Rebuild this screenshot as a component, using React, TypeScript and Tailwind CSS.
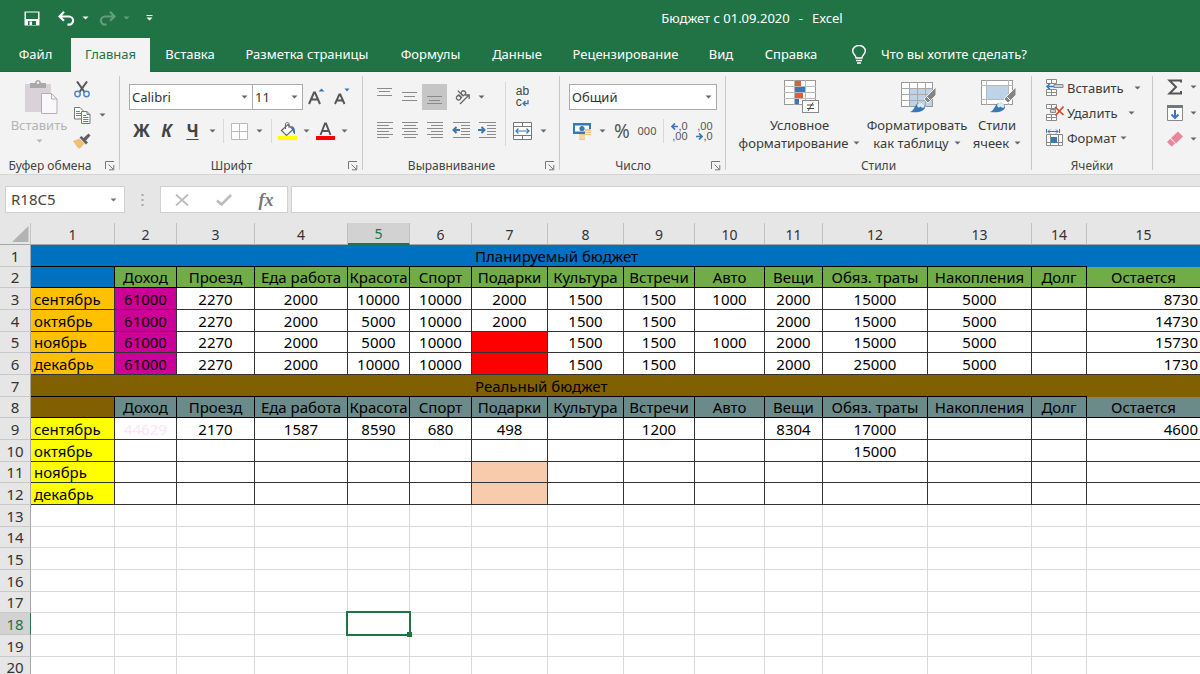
import React from "react";

type Kids = { children?: React.ReactNode };

const ribbonTabs = [
  { label: "Файл", width: "w-[71px]" },
  { label: "Главная", width: "w-[79px]" },
  { label: "Вставка", width: "w-[80px]" },
  { label: "Разметка страницы", width: "w-[154px]" },
  { label: "Формулы", width: "w-[93px]" },
  { label: "Данные", width: "w-[80px]" },
  { label: "Рецензирование", width: "w-[137px]" },
  { label: "Вид", width: "w-[54px]" },
  { label: "Справка", width: "w-[86px]" },
];

function Caret({ className = "text-[#666]" }: { className?: string }) {
  return (
    <svg width="7" height="4" viewBox="0 0 7 4" className={`shrink-0 ${className}`} aria-hidden="true">
      <path d="M0.5 0.5h6L3.5 3.6z" fill="currentColor" />
    </svg>
  );
}

function Tool({ label, width, className = "", children }: Kids & { label: string; width: string; className?: string }) {
  return (
    <button type="button" aria-label={label} className={`flex h-[26px] shrink-0 items-center justify-center ${width} ${className}`}>
      {children}
    </button>
  );
}

function Divider({ width, height = "h-6" }: { width: string; height?: string }) {
  return (
    <span className={`flex shrink-0 justify-center ${width}`}>
      <span className={`w-px bg-[#d8d8d8] ${height}`} />
    </span>
  );
}

function Group({ title, width, launcher = true, children }: Kids & { title: string; width: string; launcher?: boolean }) {
  return (
    <section aria-label={title} className={`flex shrink-0 pt-1 ${width}`}>
      <div className="flex min-w-0 flex-1 flex-col">
        <div className="h-[82px]">{children}</div>
        <div className="flex h-4 items-center">
          <span className="flex-1 text-center text-[12px] leading-4 text-[#444]">{title}</span>
          {launcher && (
            <button type="button" aria-label={`${title}: параметры`} className="flex w-[19px] justify-center text-[#777]">
              <svg width="10" height="10" viewBox="0 0 10 10" fill="none" stroke="currentColor">
                <path d="M0.5 8V0.5H9M3.5 3.5L8.5 8.5M8.8 4v4.8H4" />
              </svg>
            </button>
          )}
        </div>
      </div>
      <span className="mb-1 w-px bg-[#c9c9c9]" />
    </section>
  );
}

function Combo({ label, value, width, className = "" }: { label: string; value: string; width: string; className?: string }) {
  return (
    <div className={`relative h-[26px] shrink-0 ${width}`}>
      <select
        aria-label={label}
        defaultValue={value}
        className={`h-full w-full appearance-none border border-[#ababab] bg-white px-[2px] text-[13px] leading-6 text-[#333] ${className}`}
      >
        <option>{value}</option>
      </select>
      <span className="pointer-events-none absolute inset-y-0 right-[5px] flex items-center">
        <Caret />
      </span>
    </div>
  );
}

function Lines({ rows, width = 17, height = 18 }: { rows: [number, number, number][]; width?: number; height?: number }) {
  return (
    <svg width={width} height={height} viewBox={`0 0 ${width} ${height}`} stroke="#8a8a8a" strokeWidth="1">
      {rows.map(([x1, x2, y]) => (
        <path key={y} d={`M${x1} ${y}.5H${x2}`} />
      ))}
    </svg>
  );
}

function Indent({ right = false }: { right?: boolean }) {
  return (
    <svg width="19" height="18" viewBox="0 0 19 18" fill="none">
      <path d="M1 0.5h17M9 3.5h9M9 6.5h9M9 9.5h9M9 12.5h9M1 15.5h17" stroke="#8a8a8a" />
      {right ? (
        <path d="M0 8h6M3.5 5l3 3l-3 3" stroke="#3a77b5" strokeWidth="2" />
      ) : (
        <path d="M8 8h-6M4.5 5l-3 3l3 3" stroke="#3a77b5" strokeWidth="2" />
      )}
    </svg>
  );
}

function ClipboardIcon() {
  return (
    <svg width="33" height="34" viewBox="0 0 33 34">
      <rect x="0" y="4" width="26" height="28" fill="#d9d3d9" />
      <path d="M5 8V3h5c0-4 6-4 6 0h5v5z" fill="#a9a9a9" />
      <circle cx="13" cy="2.8" r="1.2" fill="#f3f3f3" />
      <path d="M16.5 13.5h10l5.500 5.500v14.500h-15.500z" fill="#fbf8fc" stroke="#b5aeb8" />
      <path d="M26.500 13.500v5.500h5.500" fill="none" stroke="#b5aeb8" />
    </svg>
  );
}

function ScissorsIcon() {
  return (
    <svg width="16" height="17" viewBox="0 0 16 17" fill="none">
      <path d="M3 0.500l7.500 10.500M13 0.500L5.500 11" stroke="#555" strokeWidth="2" />
      <circle cx="3.500" cy="13" r="2.700" stroke="#4a86c5" strokeWidth="1.400" />
      <circle cx="12.500" cy="13" r="2.700" stroke="#4a86c5" strokeWidth="1.400" />
    </svg>
  );
}

function CopyIcon() {
  return (
    <svg width="17" height="17" viewBox="0 0 17 17" fill="#fff" stroke="#777">
      <path d="M0.500 0.500h5.500l3 3v8.500h-8.500z" />
      <path d="M2 4.500h4M2 6.500h5M2 8.500h5" stroke="#4a86c5" />
      <path d="M7.500 4.500h5.500l3 3v9h-8.500z" />
      <path d="M13 4.500v3h3" fill="none" />
      <path d="M9 8.500h3M9 10.500h5.500M9 12.500h5.500M9 14.500h5.500" stroke="#4a86c5" />
    </svg>
  );
}

function PainterIcon() {
  return (
    <svg width="18" height="16" viewBox="0 0 18 16">
      <path d="M0 8l6.500-2.500l5 5L7 15.500c-1 0.500-2-0.500-3-1.500z" fill="#f0be74" />
      <path d="M6.500 4.500l2-1.500l2 2l5-4.500l2 2l-4.500 5l2 2l-2 2z" fill="#606060" />
    </svg>
  );
}

function ConditionalIcon() {
  return (
    <svg width="35" height="34" viewBox="0 0 35 34">
      <rect x="0.500" y="0.500" width="31" height="24" fill="#fff" stroke="#999" />
      <path d="M0 6.500h32M0 12.500h32M0 18.500h32M10.500 0v25M21.500 0v25" stroke="#b8b8b8" fill="none" />
      <path d="M11 1h6v5h-6zM11 13h8v5h-8z" fill="#d9603f" />
      <path d="M11 7h10v5h-10zM11 19h4v5h-4z" fill="#3a77b5" />
      <rect x="18.500" y="20.500" width="16" height="12" fill="#fff" stroke="#888" />
      <path d="M23 25h7M23 28.500h7M29 22.500l-5 8.500" stroke="#444" fill="none" />
    </svg>
  );
}

function Brush() {
  return (
    <g>
      <path d="M35 7L23 19l4 4l8-8z" fill="#858585" stroke="#f3f3f3" />
      <path d="M25.500 16.500l4 4" stroke="#fff" />
      <path d="M9 32c3-1 4-4 6-7c3-4 9-2 9 2c0 4-6 6-15 5z" fill="#3a77b5" />
      <path d="M16.500 24c3-2.500 7-1 7 2.500c-1 2.500-3 1-4 0c-2 2-4 0.500-3-2.500z" fill="#dbe8f5" />
    </g>
  );
}

function FormatTableIcon() {
  return (
    <svg width="36" height="34" viewBox="0 0 36 34">
      <rect x="0.500" y="2.500" width="31" height="24" fill="#fff" stroke="#999" />
      <rect x="9" y="9" width="22" height="17" fill="#bfd3e8" />
      <path d="M0 8.500h32M0 14.500h32M0 20.500h32M8.500 2v25M16.500 2v25M24.500 2v25" stroke="#a9a9a9" fill="none" />
      <Brush />
    </svg>
  );
}

function CellStylesIcon() {
  return (
    <svg width="36" height="34" viewBox="0 0 36 34">
      <rect x="0.500" y="0.500" width="31" height="24" fill="#fff" stroke="#999" />
      <path d="M0 5.500h32M0 19.500h32M5.500 0v25M27.500 0v25" stroke="#b8b8b8" fill="none" />
      <rect x="6" y="6" width="21" height="13" fill="#bfd3e8" />
      <Brush />
    </svg>
  );
}

function InsertCellsIcon() {
  return (
    <svg width="18" height="17" viewBox="0 0 18 17" fill="#fff" stroke="#8a8a8a">
      <path d="M0.500 0.500h10v4h-10zM5.500 0.500v4M0.500 10.500h10v6h-10zM5.500 10.500v6M0.500 13.500h10" />
      <path d="M8 5.500h9v3h-9z" fill="#bfd3e8" />
      <path d="M8 7.500H1M4 4.500l-3 3l3 3" fill="none" stroke="#3a77b5" strokeWidth="1.500" />
    </svg>
  );
}

function DeleteCellsIcon() {
  return (
    <svg width="18" height="17" viewBox="0 0 18 17" fill="#fff" stroke="#8a8a8a">
      <path d="M0.500 0.500h10v4h-10zM5.500 0.500v4M0.500 10.500h10v6h-10zM5.500 10.500v6M0.500 13.500h10" />
      <path d="M4.500 5.500h5v3h-5z" fill="#bfd3e8" />
      <path d="M9 3l8.500 8M17.500 2.500l-8 9" fill="none" stroke="#d9492b" strokeWidth="1.700" />
    </svg>
  );
}

function FormatCellsIcon() {
  return (
    <svg width="18" height="18" viewBox="0 0 18 18" fill="none" stroke="#8a8a8a">
      <path d="M0.500 0v4M13.500 0v4M2 2.500h10M4 0.500l-2 2l2 2M10 0.500l2 2l-2 2" stroke="#3a77b5" />
      <path d="M0.500 5.500h16v11h-16zM4.500 5.500v11M12.500 5.500v11M0.500 13.500h16" fill="#fff" />
      <rect x="5" y="8" width="6" height="6" fill="#3a77b5" stroke="none" />
    </svg>
  );
}

function BigButton({ icon, first, second, width }: { icon: React.ReactNode; first: string; second: string; width: string }) {
  return (
    <button type="button" className={`flex shrink-0 flex-col items-center text-[13px] leading-[18px] text-[#3b3b3b] ${width}`}>
      <span className="pl-1">{icon}</span>
      <span className="mt-[2px] whitespace-nowrap">{first}</span>
      <span className="flex items-center gap-[5px] whitespace-nowrap">
        {second}
        <Caret />
      </span>
    </button>
  );
}

function CellCommand({ icon, label, gap }: { icon: React.ReactNode; label: string; gap: string }) {
  return (
    <button type="button" className={`flex h-[25px] items-center text-[13px] leading-5 text-[#3b3b3b] ${gap}`}>
      <span className="flex items-center gap-[3px]">
        {icon}
        {label}
      </span>
      <Caret />
    </button>
  );
}

function TitleBar() {
  return (
    <header className="relative flex h-[38px] shrink-0 items-center bg-[#217346] pb-[2px] pl-6 text-white">
      <button type="button" aria-label="Сохранить" className="flex w-4 justify-center">
        <svg width="16" height="15" viewBox="0 0 16 15">
          <path d="M0.500 0.500h15v14h-15z" fill="#fff" />
          <path d="M2 1.500h12v6.500h-12zM4 10h8v4h-8z" fill="#217346" />
          <path d="M5.500 10.500h2.500v3.500h-2.500z" fill="#fff" />
        </svg>
      </button>
      <button type="button" aria-label="Отменить" className="ml-[18px] flex items-center gap-[7px]">
        <svg width="17" height="15" viewBox="0 0 17 15" fill="none" stroke="#fff" strokeWidth="2.200">
          <path d="M6 0.800L1.500 5.500L6 9.800M1.500 5.500H11a4 4 0 0 1 0 8.200H9.500" />
        </svg>
        <Caret className="text-white" />
      </button>
      <button type="button" aria-label="Вернуть" disabled className="ml-[10px] flex items-center gap-[7px] opacity-30">
        <svg width="17" height="15" viewBox="0 0 17 15" fill="none" stroke="#fff" strokeWidth="2.200">
          <path d="M11 0.800L15.500 5.500L11 9.800M15.500 5.500H6a4 4 0 0 0 0 8.200H7.500" />
        </svg>
        <Caret className="text-white" />
      </button>
      <button type="button" aria-label="Настройка панели" className="ml-4 flex">
        <svg width="7" height="6" viewBox="0 0 7 6" fill="#fff">
          <path d="M0.500 0h6v1h-6zM0.500 2.500h6l-3 3z" />
        </svg>
      </button>
      <h1 className="pointer-events-none absolute inset-x-0 flex justify-center gap-[9px] pl-[304px] text-[13px] leading-5 whitespace-nowrap">
        <span>Бюджет с 01.09.2020</span>
        <span>-</span>
        <span>Excel</span>
      </h1>
    </header>
  );
}

function RibbonTabs() {
  return (
    <nav className="flex h-[34px] shrink-0 border-b border-[#1c6b3f] bg-[#217346] text-[13px] text-white">
      {ribbonTabs.map((tab) => (
        <button
          key={tab.label}
          type="button"
          className={`h-[34px] shrink-0 whitespace-nowrap ${tab.width} ${tab.label === "Главная" ? "bg-[#f3f3f3] text-[#217346]" : ""}`}
        >
          {tab.label}
        </button>
      ))}
      <button type="button" className="flex shrink-0 items-center gap-[15px] pl-[18px] whitespace-nowrap">
        <svg width="14" height="19" viewBox="0 0 14 19" fill="none" stroke="#fff" strokeWidth="1.400">
          <path d="M4 13c0-3-3.300-3.500-3.300-7a6.300 5.500 0 0 1 12.600 0c0 3.500-3.300 4-3.300 7zM4 15.500h6M5 18h4" />
        </svg>
        Что вы хотите сделать?
      </button>
    </nav>
  );
}

function Ribbon() {
  return (
    <div className="flex h-[103px] shrink-0 border-b border-[#d5d5d5] bg-[#f3f3f3]">
      <Group title="Буфер обмена" width="w-[120px]">
        <div className="flex pl-[9px]">
          <button type="button" className="flex w-[60px] flex-col items-center pt-1 text-[13px] leading-[18px] text-[#b4b4b4]">
            <span className="pl-[5px]">
              <ClipboardIcon />
            </span>
            <span className="mt-[2px]">Вставить</span>
            <span className="mt-[5px]">
              <Caret className="text-[#b4b4b4]" />
            </span>
          </button>
          <div className="flex flex-col pl-[3px]">
            <Tool label="Вырезать" width="w-5">
              <ScissorsIcon />
            </Tool>
            <div className="flex">
              <Tool label="Копировать" width="w-5">
                <CopyIcon />
              </Tool>
              <Tool label="Варианты копирования" width="w-5">
                <Caret />
              </Tool>
            </div>
            <Tool label="Формат по образцу" width="w-5">
              <PainterIcon />
            </Tool>
          </div>
        </div>
      </Group>

      <Group title="Шрифт" width="w-[243px]">
        <div className="flex flex-col gap-2 pt-2 pl-[9px]">
          <div className="flex">
            <Combo label="Шрифт" value="Calibri" width="w-[124px]" />
            <Combo label="Размер шрифта" value="11" width="w-[50px]" className="border-l-0" />
            <Tool label="Увеличить размер шрифта" width="w-[27px]">
              <svg width="17" height="18" viewBox="0 0 17 18" fill="none">
                <path d="M1 16L6 4.500h1L12 16M3 11.500h7" stroke="#555" strokeWidth="2" />
                <path d="M10.500 3.500L13.500 0.500l3 3z" fill="#3a77b5" />
              </svg>
            </Tool>
            <Tool label="Уменьшить размер шрифта" width="w-6">
              <svg width="16" height="18" viewBox="0 0 16 18" fill="none">
                <path d="M1 16L5.300 6.500h1L10.500 16M2.800 12.500h6" stroke="#555" strokeWidth="1.900" />
                <path d="M10.500 0.500h5l-2.500 3z" fill="#3a77b5" />
              </svg>
            </Tool>
          </div>
          <div className="flex items-center text-[17px] leading-6 font-bold text-[#444]">
            <Tool label="Полужирный" width="w-[25px]">Ж</Tool>
            <Tool label="Курсив" width="w-[25px]" className="italic">К</Tool>
            <Tool label="Подчёркнутый" width="w-[27px]" className="underline decoration-1 underline-offset-2">Ч</Tool>
            <Tool label="Варианты подчёркивания" width="w-3">
              <Caret />
            </Tool>
            <Divider width="w-[10px]" />
            <Tool label="Границы" width="w-[22px]">
              <svg width="17" height="17" viewBox="0 0 17 17" fill="#fff" stroke="#bbb">
                <path d="M0.500 0.500h16v16h-16zM8.500 0.500v16M0.500 8.500h16" />
              </svg>
            </Tool>
            <Tool label="Варианты границ" width="w-[18px]">
              <Caret />
            </Tool>
            <Divider width="w-[6px]" />
            <Tool label="Цвет заливки" width="w-[26px]">
              <svg width="19" height="18" viewBox="0 0 19 18" fill="none">
                <path d="M3.500 8.500L10 2.500l5 5l-6.500 6z" fill="#fff" stroke="#666" strokeWidth="1.200" />
                <path d="M7.500 7V2c0-2 3.500-2 3.500 0v4" stroke="#666" />
                <path d="M13 4c3 0 4.500 3 4 8c-2 0-2-4-3-5z" fill="#3a77b5" />
                <path d="M0 14h19v4H0z" fill="#ff0" />
              </svg>
            </Tool>
            <Tool label="Выбор цвета заливки" width="w-3">
              <Caret />
            </Tool>
            <Tool label="Цвет текста" width="w-[26px]">
              <svg width="19" height="18" viewBox="0 0 19 18" fill="none">
                <path d="M4.500 13L9 1.500h1L14.500 13M6 9h7" stroke="#555" strokeWidth="1.900" />
                <path d="M0 14h19v4H0z" fill="#f00" />
              </svg>
            </Tool>
            <Tool label="Выбор цвета текста" width="w-3">
              <Caret />
            </Tool>
          </div>
        </div>
      </Group>

      <Group title="Выравнивание" width="w-[197px]">
        <div className="flex pl-[9px]">
          <div className="flex flex-col gap-2 pt-2">
            <div className="flex">
              <Tool label="По верхнему краю" width="w-[25px]">
                <Lines rows={[[1, 16, 0], [3, 14, 3], [1, 16, 7]]} />
              </Tool>
              <Tool label="По середине" width="w-[25px]">
                <Lines rows={[[1, 16, 4], [3, 14, 8], [1, 16, 12]]} />
              </Tool>
              <Tool label="По нижнему краю" width="w-[25px]" className="bg-[#c6c6c6]">
                <Lines rows={[[1, 16, 8], [3, 14, 12], [1, 16, 15]]} />
              </Tool>
              <Tool label="Ориентация" width="w-[30px]">
                <svg width="17" height="16" viewBox="0 0 17 16" fill="none" stroke="#666" strokeWidth="1.300">
                  <path d="M6 15L15 6M11 6h4.200v4" />
                  <g transform="rotate(-45 6 6)">
                    <circle cx="3" cy="7" r="2.200" />
                    <path d="M5.300 4.500v5M7.500 1.500v8" />
                    <circle cx="9.800" cy="7" r="2.200" />
                  </g>
                </svg>
              </Tool>
              <Tool label="Варианты ориентации" width="w-2">
                <Caret />
              </Tool>
            </div>
            <div className="flex">
              <Tool label="По левому краю" width="w-[25px]">
                <Lines rows={[[1, 17, 0], [1, 13, 3], [1, 17, 6], [1, 13, 9], [1, 17, 12], [1, 13, 15]]} />
              </Tool>
              <Tool label="По центру" width="w-[25px]">
                <Lines rows={[[1, 17, 0], [3, 15, 3], [1, 17, 6], [3, 15, 9], [1, 17, 12], [3, 15, 15]]} />
              </Tool>
              <Tool label="По правому краю" width="w-[25px]">
                <Lines rows={[[1, 17, 0], [5, 17, 3], [1, 17, 6], [5, 17, 9], [1, 17, 12], [5, 17, 15]]} />
              </Tool>
              <Tool label="Уменьшить отступ" width="w-[28px]">
                <Indent />
              </Tool>
              <Tool label="Увеличить отступ" width="w-[25px]">
                <Indent right />
              </Tool>
            </div>
          </div>
          <div className="pt-[6px]">
            <Divider width="w-[10px]" height="h-16" />
          </div>
          <div className="flex flex-col gap-2 pt-2">
            <Tool label="Перенести текст" width="w-[25px]">
              <span className="flex flex-col font-['Liberation_Sans',sans-serif] text-[12px] leading-[11px] text-[#444]">
                <span>ab</span>
                <span className="flex">
                  c
                  <svg width="7" height="7" viewBox="0 0 7 7" fill="none" stroke="#3a77b5" strokeWidth="1.300" className="mt-[3px]">
                    <path d="M6 0v3.500H1M3.500 1L1 3.500L3.500 6" />
                  </svg>
                </span>
              </span>
            </Tool>
            <div className="flex">
              <Tool label="Объединить и поместить в центре" width="w-[25px]">
                <svg width="19" height="18" viewBox="0 0 19 18" fill="none" stroke="#777">
                  <path d="M0.500 0.500h18v17h-18zM0.500 4.500h18M0.500 13.500h18M9.500 0.500v4M9.500 13.500v4" fill="#fff" />
                  <path d="M3 9h13M5.500 6.500L3 9l2.500 2.500M13.500 6.500L16 9l-2.500 2.500" stroke="#3a77b5" strokeWidth="1.200" />
                </svg>
              </Tool>
              <Tool label="Варианты объединения" width="w-4">
                <Caret />
              </Tool>
            </div>
          </div>
        </div>
      </Group>

      <Group title="Число" width="w-[166px]">
        <div className="flex flex-col gap-2 pt-2 pl-[9px]">
          <Combo label="Числовой формат" value="Общий" width="w-[148px]" />
          <div className="flex items-center text-[#555]">
            <Tool label="Финансовый формат" width="w-[26px]">
              <svg width="19" height="17" viewBox="0 0 19 17" fill="none">
                <path d="M0 0h18v11H0z" fill="#3a77b5" />
                <path d="M2 2.500h14v6H2z" fill="#fff" />
                <circle cx="9" cy="5.500" r="2.600" fill="#3a77b5" />
                <path d="M12 6h6v6h-6zM6 11h6v6H6z" fill="#efc78b" />
                <path d="M12 8.500h6M12 10.500h6M6 13h6M6 15h6" stroke="#fae6c7" />
              </svg>
            </Tool>
            <Tool label="Варианты валют" width="w-[14px]">
              <Caret />
            </Tool>
            <Tool label="Процентный формат" width="w-[26px]" className="text-[19px]">%</Tool>
            <Tool label="Формат с разделителями" width="w-6" className="text-[11px]">000</Tool>
            <Divider width="w-2" />
            <Tool label="Увеличить разрядность" width="w-[25px]">
              <span className="flex flex-col items-end font-['Liberation_Sans',sans-serif] text-[11px] leading-[10px]">
                <span className="flex items-center">
                  <svg width="7" height="7" viewBox="0 0 7 7" fill="none" stroke="#3a77b5" strokeWidth="1.700">
                    <path d="M7 3.500H1M4 0.500l-3 3l3 3" />
                  </svg>
                  ,0
                </span>
                <span>,00</span>
              </span>
            </Tool>
            <Tool label="Уменьшить разрядность" width="w-[25px]">
              <span className="flex flex-col items-end font-['Liberation_Sans',sans-serif] text-[11px] leading-[10px]">
                <span>,00</span>
                <span className="flex items-center">
                  <svg width="7" height="7" viewBox="0 0 7 7" fill="none" stroke="#3a77b5" strokeWidth="1.700">
                    <path d="M0 3.500h6M3 0.500l3 3l-3 3" />
                  </svg>
                  ,0
                </span>
              </span>
            </Tool>
          </div>
        </div>
      </Group>

      <Group title="Стили" width="w-[306px]" launcher={false}>
        <div className="flex pt-1 pl-[11px]">
          <BigButton icon={<ConditionalIcon />} first="Условное" second="форматирование" width="w-[125px]" />
          <BigButton icon={<FormatTableIcon />} first="Форматировать" second="как таблицу" width="w-[110px]" />
          <BigButton icon={<CellStylesIcon />} first="Стили" second="ячеек" width="w-[50px]" />
        </div>
      </Group>

      <Group title="Ячейки" width="w-[121px]" launcher={false}>
        <div className="-mt-px flex flex-col pl-[14px]">
          <CellCommand icon={<InsertCellsIcon />} label="Вставить" gap="gap-[10px]" />
          <CellCommand icon={<DeleteCellsIcon />} label="Удалить" gap="gap-[10px]" />
          <CellCommand icon={<FormatCellsIcon />} label="Формат" gap="gap-1" />
        </div>
      </Group>

      <section aria-label="Редактирование" className="min-w-0 flex-1 overflow-hidden pt-[2px] pl-[13px]">
        <button type="button" aria-label="Автосумма" className="flex h-[26px] items-center gap-[6px]">
          <svg width="18" height="16" viewBox="0 0 18 16" fill="none" stroke="#555" strokeWidth="2">
            <path d="M15 3.500V1.500H3.500L10 8l-6.500 6.500H15V12" />
          </svg>
          <Caret />
        </button>
        <button type="button" aria-label="Заполнить" className="flex h-[26px] items-center gap-[6px]">
          <svg width="18" height="18" viewBox="0 0 18 18" fill="none">
            <path d="M1.500 1.500h15v15h-15z" fill="#fff" stroke="#888" />
            <path d="M1 1h16v3H1z" fill="#777" />
            <path d="M9 6v8M5.500 10.500L9 14l3.500-3.500" stroke="#3a77b5" strokeWidth="2" />
          </svg>
          <Caret />
        </button>
        <button type="button" aria-label="Очистить" className="flex h-[26px] items-center gap-[6px]">
          <svg width="18" height="16" viewBox="0 0 18 16">
            <path d="M5 7L12 0.500l5 5L10 12.500z" fill="#e8879b" />
            <path d="M4.300 7.700L1 11l4.500 4.500l3.700-3z" fill="#e8879b" />
          </svg>
          <Caret />
        </button>
      </section>
    </div>
  );
}

function FormulaBar() {
  return (
    <div className="flex shrink-0 items-stretch pt-[11px] pb-[10px] pl-[5px]">
      <div className="relative h-[27px] w-[120px] shrink-0">
        <input
          aria-label="Поле имени"
          defaultValue="R18C5"
          className="h-full w-full border border-[#d0d0d0] bg-white px-[5px] pb-[2px] text-[15px] leading-6 text-[#444]"
        />
        <span className="pointer-events-none absolute inset-y-0 right-2 flex items-center">
          <Caret className="text-[#777]" />
        </span>
      </div>
      <div className="flex w-[35px] shrink-0 items-center justify-center">
        <svg width="3" height="12" viewBox="0 0 3 12" fill="#a5a5a5">
          <path d="M0.500 0h2v2h-2zM0.500 5h2v2h-2zM0.500 10h2v2h-2z" />
        </svg>
      </div>
      <div className="flex w-[128px] shrink-0 items-center border border-[#d0d0d0] bg-white">
        <button type="button" aria-label="Отмена" className="flex w-[42px] justify-center">
          <svg width="14" height="12" viewBox="0 0 14 12" fill="none" stroke="#bcbcbc" strokeWidth="1.800">
            <path d="M1 0.500l12 11M13 0.500l-12 11" />
          </svg>
        </button>
        <button type="button" aria-label="Ввод" className="flex w-[42px] justify-center">
          <svg width="16" height="12" viewBox="0 0 16 12" fill="none" stroke="#bcbcbc" strokeWidth="2.600">
            <path d="M1 6.500l4.500 4L15 1" />
          </svg>
        </button>
        <button type="button" aria-label="Вставить функцию" className="w-[42px] text-center font-['Liberation_Serif',serif] text-[18px] leading-6 font-bold text-[#777] italic">
          fx
        </button>
      </div>
      <input aria-label="Строка формул" className="ml-[3px] min-w-0 flex-1 border border-r-0 border-[#d0d0d0] bg-white px-1" />
    </div>
  );
}

const columnWidths = [
  "w-[31px]", "w-[84px]", "w-[62px]", "w-[78px]", "w-[93px]", "w-[62px]", "w-[62px]", "w-[76px]",
  "w-[76px]", "w-[71px]", "w-[70px]", "w-[58px]", "w-[105px]", "w-[104px]", "w-[55px]", "w-auto",
];

const categories = [
  "Доход", "Проезд", "Еда работа", "Красота", "Спорт", "Подарки", "Культура",
  "Встречи", "Авто", "Вещи", "Обяз. траты", "Накопления", "Долг", "Остается",
];

const planned: string[][] = [
  ["сентябрь", "61000", "2270", "2000", "10000", "10000", "2000", "1500", "1500", "1000", "2000", "15000", "5000", "", "8730"],
  ["октябрь", "61000", "2270", "2000", "5000", "10000", "2000", "1500", "1500", "", "2000", "15000", "5000", "", "14730"],
  ["ноябрь", "61000", "2270", "2000", "5000", "10000", "", "1500", "1500", "1000", "2000", "15000", "5000", "", "15730"],
  ["декабрь", "61000", "2270", "2000", "10000", "10000", "", "1500", "1500", "", "2000", "25000", "5000", "", "1730"],
];

const actual: string[][] = [
  ["сентябрь", "44629", "2170", "1587", "8590", "680", "498", "", "1200", "", "8304", "17000", "", "", "4600"],
  ["октябрь", "", "", "", "", "", "", "", "", "", "", "15000", "", "", ""],
  ["ноябрь", "", "", "", "", "", "", "", "", "", "", "", "", "", ""],
  ["декабрь", "", "", "", "", "", "", "", "", "", "", "", "", "", ""],
];

function Row({ n, children }: Kids & { n: number }) {
  const selected = n === 18;
  return (
    <tr className={n % 3 === 2 ? "h-[21px]" : "h-[22px]"}>
      <th
        scope="row"
        className={`border-r border-b p-0 text-center font-normal ${
          selected ? "border-r-[#217346] border-b-[#c4c4c4] bg-[#d2d2d2] text-[#217346]" : "border-r-[#a6a6a6] border-b-[#c9c9c9] bg-[#e6e6e6] text-[#333]"
        }`}
      >
        {n}
      </th>
      {children}
    </tr>
  );
}

function BannerRow({ n, title, color, edge }: { n: number; title: string; color: string; edge: string }) {
  return (
    <Row n={n}>
      <td colSpan={6} className={`border-b border-black p-0 ${color}`} />
      <td colSpan={8} className={`border-b border-black p-0 pl-[3px] ${color}`}>{title}</td>
      <td className={`border-b p-0 ${color} ${edge}`} />
    </Row>
  );
}

function HeadingRow({ n, color, corner }: { n: number; color: string; corner: string }) {
  return (
    <Row n={n}>
      <td className={`border-r border-b border-black p-0 ${corner}`} />
      {categories.map((name) => (
        <td key={name} className={`border-r border-b border-black p-0 text-center last:border-r-0 ${color}`}>{name}</td>
      ))}
    </Row>
  );
}

function DataRow({ n, values, month, income, gift }: { n: number; values: string[]; month: string; income: string; gift: string }) {
  return (
    <Row n={n}>
      {values.map((value, i) => {
        let look = "px-0 text-center";
        if (i === 0) look = `pr-0 pl-[3px] text-left ${month}`;
        else if (i === 1) look = `px-0 text-center ${income}`;
        else if (i === 6) look = `px-0 text-center ${gift}`;
        else if (i === 14) look = "pr-[2px] pl-0 text-right";
        return (
          <td key={i} className={`border-r border-b border-[#333] py-0 last:border-r-0 ${look}`}>
            {value}
          </td>
        );
      })}
    </Row>
  );
}

function Sheet() {
  return (
    <table className="w-full shrink-0 table-fixed border-separate border-spacing-0 bg-white text-[15px] leading-5 whitespace-nowrap text-black">
      <colgroup>
        {columnWidths.map((width, i) => (
          <col key={i} className={width} />
        ))}
      </colgroup>
      <thead>
        <tr className="h-[22px]">
          <th aria-label="Выделить всё" className="border-r border-b border-r-[#c6c6c6] border-b-[#a6a6a6] bg-[#e6e6e6] p-0">
            <svg width="17" height="16" viewBox="0 0 17 16" className="ml-3">
              <path d="M16.500 0v16H0z" fill="#b3b3b3" />
            </svg>
          </th>
          {columnWidths.slice(1).map((_, i) => (
            <th
              key={i}
              scope="col"
              className={`border-r border-r-[#c0c0c0] p-0 pt-[2px] text-[14px] leading-[18px] font-normal last:border-r-0 ${
                i === 4 ? "border-b-2 border-b-[#217346] bg-[#d2d2d2] text-[#217346]" : "border-b border-b-[#a6a6a6] bg-[#e6e6e6] text-[#333]"
              }`}
            >
              {i + 1}
            </th>
          ))}
        </tr>
      </thead>
      <tbody>
        <BannerRow n={1} title="Планируемый бюджет" color="bg-[#0070c0]" edge="border-[#0070c0]" />
        <HeadingRow n={2} color="bg-[#70ad47]" corner="bg-[#0070c0]" />
        {planned.map((values, i) => (
          <DataRow key={i} n={3 + i} values={values} month="bg-[#ffc000]" income="bg-[#cc0099]" gift={i > 1 ? "bg-[#ff0000]" : ""} />
        ))}
        <BannerRow n={7} title="Реальный бюджет" color="bg-[#806000]" edge="border-[#806000]" />
        <HeadingRow n={8} color="bg-[#6b8a8a]" corner="bg-[#806000]" />
        {actual.map((values, i) => (
          <DataRow key={i} n={9 + i} values={values} month="bg-[#ffff00]" income="text-[#fde3f6]" gift={i > 1 ? "bg-[#f8cbad]" : ""} />
        ))}
        {[13, 14, 15, 16, 17, 18, 19, 20].map((n) => (
          <Row key={n} n={n}>
            {columnWidths.slice(1).map((_, i) => (
              <td key={i} className={`border-r border-b border-[#d9d9d9] p-0 last:border-r-0 ${n === 18 && i === 4 ? "relative z-10" : ""}`}>
                {n === 18 && i === 4 && (
                  <span className="absolute -inset-[2px] border-2 border-[#217346]">
                    <span className="absolute -right-[3px] -bottom-[3px] h-[5px] w-[5px] bg-[#217346]" />
                  </span>
                )}
              </td>
            ))}
          </Row>
        ))}
      </tbody>
    </table>
  );
}

export default function App() {
  return (
    <main className="flex h-screen flex-col overflow-hidden bg-[#e6e6e6] font-['Noto_Sans',sans-serif]">
      <TitleBar />
      <RibbonTabs />
      <Ribbon />
      <FormulaBar />
      <Sheet />
    </main>
  );
}
